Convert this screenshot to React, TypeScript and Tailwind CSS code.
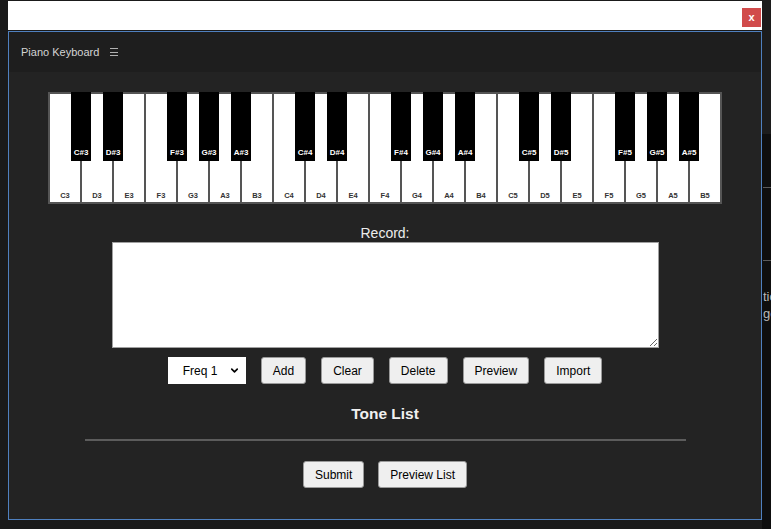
import { ChevronDown } from "lucide-react";

const OCTAVES = [3, 4, 5];
const NATURALS = ["C", "D", "E", "F", "G", "A", "B"];
const HAS_SHARP = ["C", "D", "F", "G", "A"];

const whiteKeys = OCTAVES.flatMap((o) => NATURALS.map((n) => `${n}${o}`));

const blackKeys = whiteKeys
  .map((note, index) => ({ note, index }))
  .filter(({ note }) => HAS_SHARP.includes(note[0]))
  .map(({ note, index }) => ({ name: `${note[0]}#${note[1]}`, index }));

function Piano() {
  return (
    <div className="relative flex gap-[2px] bg-[#555] p-[2px] w-[674px] h-[112px]">
      {whiteKeys.map((k) => (
        <div
          key={k}
          className="w-[30px] bg-white flex items-end justify-center pb-[3px] text-[7.5px] font-bold leading-none text-[#333]"
        >
          {k}
        </div>
      ))}
      {blackKeys.map((b) => (
        <div
          key={b.name}
          className="absolute top-0 h-[69px] w-[20px] bg-black flex items-end justify-center pb-[4px] text-[8px] font-bold leading-none text-white"
          style={{ left: 32 * b.index + 23 }}
        >
          {b.name}
        </div>
      ))}
    </div>
  );
}

function Btn({ children }: { children: string }) {
  return (
    <button
      type="button"
      className="h-[27px] px-[11px] bg-[#efefef] border border-[#9a9a9a] rounded-[3px] text-[12px] text-black leading-none"
    >
      {children}
    </button>
  );
}

export default function App() {
  return (
    <div className="w-[771px] h-[529px] bg-[#1a1a1a] flex overflow-hidden font-['Liberation_Sans',Arial,sans-serif]">
      <div className="w-[8px] shrink-0" />

      <div className="w-[754px] shrink-0 flex flex-col">
        <div className="mt-px h-[29px] bg-white flex items-start justify-end pt-[7px] pr-px">
          <button
            type="button"
            className="w-[19px] h-[19px] bg-[#d14b4b] text-white text-[11px] font-bold leading-none flex items-center justify-center"
          >
            x
          </button>
        </div>

        <div className="mt-px h-[489px] border border-[#4f80bf] bg-[#232323] flex flex-col">
          <div className="h-[40px] shrink-0 bg-[#1e1e1e] flex items-center pl-[12px]">
            <span className="text-[11px] text-[#d4d4d4]">Piano Keyboard</span>
            <div className="ml-[11px] flex flex-col gap-[2.3px] w-[8px]">
              <div className="h-px bg-[#b0b0b0]" />
              <div className="h-px bg-[#b0b0b0]" />
              <div className="h-px bg-[#b0b0b0]" />
            </div>
          </div>

          <div className="flex-1 flex flex-col items-center pt-[20px]">
            <Piano />

            <label className="mt-[21px] text-[14px] leading-[16px] text-[#ececec]">Record:</label>
            <textarea className="mt-px w-[547px] h-[106px] bg-white border border-[#a0a0a0] text-black text-[12px] p-[2px]" />

            <div className="mt-[9px] flex items-center gap-[15px]">
              <div className="relative">
                <select className="appearance-none w-[78px] h-[27px] bg-white pl-[15px] text-[12px] text-black outline-none">
                  <option>Freq 1</option>
                  <option>Freq 2</option>
                  <option>Freq 3</option>
                </select>
                <ChevronDown
                  size={11}
                  strokeWidth={3.5}
                  className="absolute right-[6px] top-[8px] text-black pointer-events-none"
                />
              </div>
              <Btn>Add</Btn>
              <Btn>Clear</Btn>
              <Btn>Delete</Btn>
              <Btn>Preview</Btn>
              <Btn>Import</Btn>
            </div>

            <h3 className="mt-[21px] text-[15.5px] leading-[18px] font-bold text-[#f0f0f0]">Tone List</h3>
            <div className="mt-[16px] w-[601px] h-[2px] bg-[#5c5c5c]" />

            <div className="mt-[20px] flex items-center gap-[14px]">
              <Btn>Submit</Btn>
              <Btn>Preview List</Btn>
            </div>
          </div>
        </div>
      </div>

      <div className="flex-1 flex flex-col">
        <div className="h-[134px] shrink-0 bg-[#1c1c1c]" />
        <div className="flex-1 bg-[#0e0e0e] flex flex-col overflow-hidden pl-px">
          <div className="mt-[53px] h-px bg-[#5a5a5a]" />
          <div className="mt-[72px] h-px bg-[#5a5a5a]" />
          <div className="mt-[27px] text-[13px] leading-[17px] text-[#b8b8b8] whitespace-nowrap">tio</div>
          <div className="text-[13px] leading-[17px] text-[#b8b8b8] whitespace-nowrap">ge</div>
        </div>
      </div>
    </div>
  );
}
